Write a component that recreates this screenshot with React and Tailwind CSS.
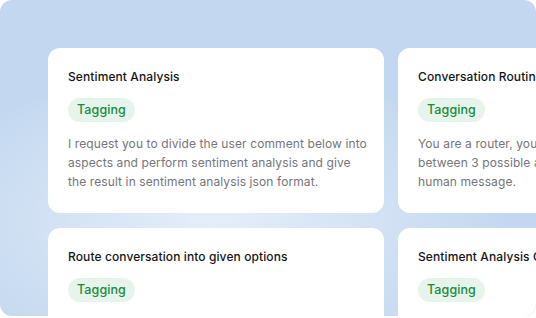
import React from "react";

const cards = [
  {
    title: "Sentiment Analysis",
    lines: [
      "I request you to divide the user comment below into",
      "aspects and perform sentiment analysis and give",
      "the result in sentiment analysis json format.",
    ],
  },
  {
    title: "Conversation Routing",
    lines: [
      "You are a router, your task is to route the conversation",
      "between 3 possible actions based on the last",
      "human message.",
    ],
  },
  { title: "Route conversation into given options", lines: [] },
  { title: "Sentiment Analysis Classification", lines: [] },
];

function Card({ title, lines }) {
  return (
    <div className="h-[165px] w-[336px] shrink-0 rounded-[12px] bg-white px-5 pt-5 overflow-hidden">
      <div className="whitespace-nowrap text-[12px] leading-[18px] font-[450] tracking-[0.1px] text-[#141416]">{title}</div>
      <div className="mt-3 flex">
        <span className="h-6 rounded-full bg-[#e6f4eb] px-[9px] text-[12.5px] leading-6 font-[450] tracking-[0.1px] text-[#1b8a3a]">
          Tagging
        </span>
      </div>
      <div className="mt-[12px] text-[12px] leading-[19px] tracking-[0.1px] text-[#75757a]">
        {lines.map((l, i) => (
          <div key={i} className="whitespace-nowrap">{l}</div>
        ))}
      </div>
    </div>
  );
}

export default function App() {
  return (
    <div className="h-[318px] w-[536px] bg-white" style={{ fontFamily: "Inter, 'Liberation Sans', sans-serif" }}>
      <div className="h-[316px] w-[536px] overflow-hidden rounded-[12px] bg-[radial-gradient(ellipse_55%_50%_at_40%_70%,#e6eef8_0%,#d3e2f4_55%,#c3d8f0_100%)] pl-12 pt-12">
        <div className="grid grid-cols-[336px_336px] gap-x-[14px] gap-y-[15px]">
          {cards.map((c, i) => (
            <Card key={i} {...c} />
          ))}
        </div>
      </div>
    </div>
  );
}
